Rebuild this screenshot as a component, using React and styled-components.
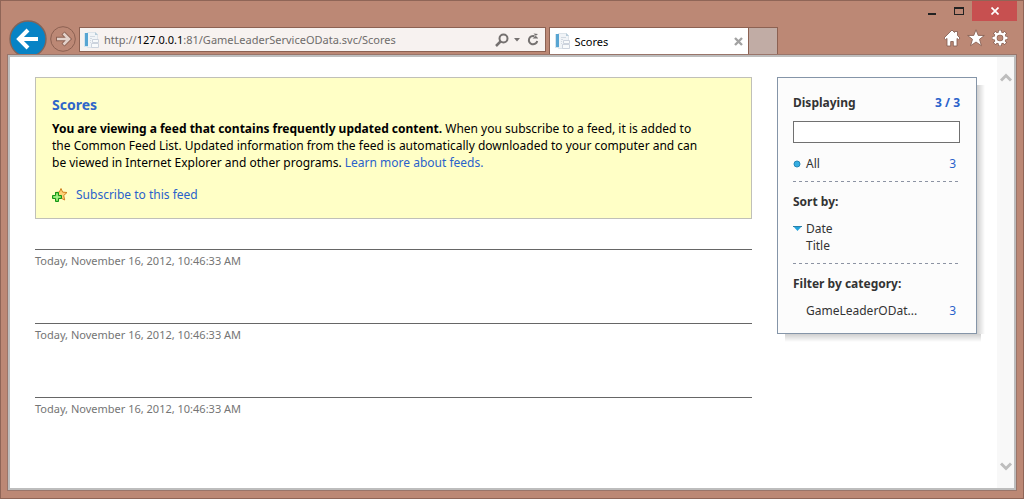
import React from 'react'
import styled, { createGlobalStyle } from 'styled-components'

const GlobalStyle = createGlobalStyle`
  * {
    box-sizing: border-box;
  }
  body {
    margin: 0;
    font-family: "Noto Sans", "Open Sans", sans-serif;
    font-size: 12px;
    line-height: 17px;
    color: #000;
  }
  button {
    border: 0;
    padding: 0;
    background: none;
    font: inherit;
  }
  svg {
    display: block;
  }
`

const Window = styled.div`
  display: flex;
  flex-direction: column;
  min-height: 100vh;
  padding: 0 6px 7px;
  border: 1px solid #8f6557;
  background: #bc8875;
`
const Caption = styled.header`
  display: flex;
  justify-content: flex-end;
  height: 20px;
`
const CaptionButton = styled.button`
  display: flex;
  align-items: center;
  justify-content: center;
  width: ${({ $close }) => ($close ? 45 : 27)}px;
  background: ${({ $close }) => ($close ? '#c75050' : 'transparent')};
`
const NavBar = styled.nav`
  display: flex;
  align-items: flex-start;
  height: 33px;
  font-size: 11px;
`
const BackButton = styled.button`
  flex: none;
  width: 38px;
  height: 38px;
  margin: -1px 3px 0 2px;
`
const ForwardButton = styled.button`
  flex: none;
  width: 26px;
  height: 26px;
  margin: 5px 3px 0 0;
`
const AddressBar = styled.div`
  display: flex;
  flex: 456 1 0;
  align-items: center;
  min-width: 0;
  height: 25px;
  margin: 6px 3px 0 0;
  padding: 0 4px 0 4px;
  border: 1px solid #8c6152;
  background: #f7f2f0;
`
const Url = styled.span`
  flex: 1;
  min-width: 0;
  margin-left: 4px;
  overflow: hidden;
  white-space: nowrap;
  color: #6f6c6b;
  b {
    font-weight: 400;
    color: #000;
  }
`
const AddressButton = styled.button`
  margin-left: 4px;
`
const Tab = styled.div`
  display: flex;
  flex: 188 1 0;
  align-items: center;
  height: 27px;
  margin-top: 6px;
  padding: 0 5px;
  border: 1px solid #8c6152;
  border-bottom: 0;
  background: #fff;
`
const TabTitle = styled.span`
  flex: 1;
  margin-left: 4px;
`
const NewTab = styled.button`
  width: 29px;
  height: 27px;
  margin-top: 6px;
  border: 1px solid #8c6152;
  border-width: 1px 1px 0 0;
  background: #c1aca5;
`
const Tools = styled.div`
  display: flex;
  flex: 231 1 0;
  justify-content: flex-end;
  gap: 6px;
  padding: 8px 8px 0 0;
`
const Frame = styled.div`
  position: relative;
  display: flex;
  flex: 1;
  border: 1px solid #99756a;
`
const Viewport = styled.div`
  display: flex;
  flex: 1;
  min-width: 0;
  border: 2px solid #bdbdbd;
  background: #fff;
`
const Page = styled.main`
  display: flex;
  flex: 1;
  align-items: flex-start;
  gap: 25px;
  min-width: 0;
  padding: 20px 20px 0 25px;
`
const Feed = styled.div`
  flex: 1;
  min-width: 0;
`
const Notice = styled.section`
  margin-bottom: 30px;
  padding: 18px 16px 15px;
  border: 1px solid #c0c0b8;
  background: #ffffc6;
  p {
    margin: 6px 0 15px;
    padding-right: 28px;
  }
`
const FeedTitle = styled.h1`
  margin: 0;
  font-size: 14px;
  line-height: 18px;
  color: #2f66c9;
`
const Link = styled.a`
  color: #2a62cb;
  text-decoration: none;
`
const Subscribe = styled(Link)`
  display: flex;
  align-items: center;
  gap: 8px;
`
const Entry = styled.article`
  height: 74px;
  padding-top: 2px;
  border-top: 1px solid #666;
  font-size: 11px;
  color: #757575;
`
const Sidebar = styled.aside`
  position: relative;
  flex: none;
  width: 200px;
  padding: 15px 16px 14px 15px;
  border: 1px solid #8595a8;
  background: #fcfcfc;
  color: #333;
  &::before,
  &::after {
    content: "";
    position: absolute;
  }
  &::before {
    top: 7px;
    bottom: -1px;
    left: 100%;
    width: 8px;
    margin-left: 1px;
    background: linear-gradient(to right, #cfcfcf, #fff);
  }
  &::after {
    top: 100%;
    left: 7px;
    right: -5px;
    height: 8px;
    margin-top: 1px;
    background: linear-gradient(to bottom, #cfcfcf, #fff);
  }
`
const Line = styled.div`
  display: flex;
  align-items: center;
  justify-content: space-between;
  height: ${({ $tall }) => ($tall ? 19 : 17)}px;
`
const Heading = styled.h2`
  margin: 0;
  font-size: 12px;
  line-height: 19px;
`
const Count = styled.span`
  padding-right: ${({ $total }) => ($total ? 0 : 4)}px;
  font-weight: ${({ $total }) => ($total ? 700 : 400)};
  color: #2a62cb;
`
const Search = styled.input`
  display: block;
  width: 100%;
  height: 22px;
  margin: 9px 0 12px;
  border: 1px solid #707070;
  background: #fff;
`
const Option = styled.button`
  display: flex;
  align-items: center;
  color: #333;
`
const Marker = styled.span`
  width: 13px;
`
const Divider = styled.hr`
  height: 1px;
  margin: 9px 2px 10px 0;
  border: 0;
  background: repeating-linear-gradient(to right, #8c93a3 0 3px, transparent 3px 6px);
`
const Group = styled.div`
  margin-top: 9px;
`
const Scrollbar = styled.div`
  display: flex;
  flex: none;
  flex-direction: column;
  justify-content: space-between;
  align-items: center;
  width: 17px;
  padding: 16px 0;
  background: #f8f8f8;
`

const PageIcon = () => (
  <svg width="16" height="16" viewBox="0 0 16 16">
    <path d="M3.5.5h8l2 2v13h-10z" fill="#f1f4f7" stroke="#dde4ea" />
    <path d="M0 1h4v14H0z" fill="#d5e5ef" />
    <path d="M1 1h3v13H1z" fill="#58a5d2" />
    <path d="M6 4.500h5M6 6.500h2M6 8.500h1M6 10.500h1" stroke="#d3dae2" />
    <path d="M8.500 7.500h6v3h-6zM7.500 11.500h7v4h-7z" fill="#f8fafb" stroke="#ccd3dd" />
    <path d="M11 0v3h3z" fill="#b6cbd9" />
  </svg>
)

const Chevron = ({ down }) => (
  <svg width="12" height="10" viewBox="0 0 12 10">
    <path d={down ? 'M1 1.5l5 5 5-5' : 'M1 7.5l5-5 5 5'} fill="none" stroke="#bdbdbd" strokeWidth="3" />
  </svg>
)

const entries = [
  'Today, November 16, 2012, 10:46:33 AM',
  'Today, November 16, 2012, 10:46:33 AM',
  'Today, November 16, 2012, 10:46:33 AM',
]

export default function App() {
  return (
    <>
      <GlobalStyle />
      <Window>
        <Caption>
          <CaptionButton aria-label="Minimize">
            <svg width="8" height="12"><path d="M0 8h8v2H0z" fill="#222" /></svg>
          </CaptionButton>
          <CaptionButton aria-label="Maximize">
            <svg width="10" height="8"><path d="M0 0h10v8H0zM1 2v5h8V2z" fill="#222" fillRule="evenodd" /></svg>
          </CaptionButton>
          <CaptionButton $close aria-label="Close">
            <svg width="8" height="8"><path d="M.5.5l7 7M7.5.5l-7 7" stroke="#fff" strokeWidth="1.7" /></svg>
          </CaptionButton>
        </Caption>
        <NavBar>
          <BackButton aria-label="Back">
            <svg width="38" height="38" viewBox="0 0 38 38">
              <circle cx="19" cy="19" r="18" fill="#0783c5" stroke="#80645a" strokeWidth="1.4" />
              <path d="M29 19H11M19 10l-9 9 9 9" fill="none" stroke="#fff" strokeWidth="4" />
            </svg>
          </BackButton>
          <ForwardButton aria-label="Forward">
            <svg width="26" height="26" viewBox="0 0 26 26">
              <circle cx="13" cy="13" r="12.3" fill="none" stroke="#8c6152" />
              <path d="M6 13h12M13 7l6 6-6 6" fill="none" stroke="#8c6152" strokeWidth="4.4" />
              <path d="M7 13h11M13.5 7.5L19 13l-5.500 5.500" fill="none" stroke="#e3d2ca" strokeWidth="2.600" />
            </svg>
          </ForwardButton>
          <AddressBar>
            <PageIcon />
            <Url>http://<b>127.0.0.1</b>:81/GameLeaderServiceOData.svc/Scores</Url>
            <AddressButton aria-label="Search">
              <svg width="14" height="14" viewBox="0 0 14 14" fill="none" stroke="#757170">
                <circle cx="8.500" cy="5.500" r="4" strokeWidth="2" />
                <path d="M5.500 8.500L1 13" strokeWidth="2.500" />
              </svg>
            </AddressButton>
            <AddressButton aria-label="Show address list">
              <svg width="8" height="5"><path d="M1 1h6L4 4.500z" fill="#757170" /></svg>
            </AddressButton>
            <AddressButton aria-label="Refresh">
              <svg width="16" height="14" viewBox="0 0 16 14">
                <path d="M9.500 3.200A4.200 4.200 0 1 0 12.200 8" fill="none" stroke="#757170" strokeWidth="2" />
                <path d="M8.500.5l4.500 4.500V1M13 1v4.500H7.500z" fill="#757170" />
              </svg>
            </AddressButton>
          </AddressBar>
          <Tab>
            <PageIcon />
            <TabTitle>Scores</TabTitle>
            <button aria-label="Close tab">
              <svg width="9" height="9"><path d="M1 1l7 7M8 1L1 8" stroke="#a2a2a2" strokeWidth="2.400" /></svg>
            </button>
          </Tab>
          <NewTab aria-label="New tab" />
          <Tools>
            <button aria-label="Home">
              <svg width="18" height="18" viewBox="0 0 18 18">
                <path d="M9 1L1 9l1.500 1.700L4 9.400V17h3.700v-4.500h2.600V17H14V9.400l1.500 1.300L17 9l-2.500-2.500V2.500h-3v1z" fill="#fff" stroke="#80594c" strokeWidth=".8" />
              </svg>
            </button>
            <button aria-label="Favorites">
              <svg width="18" height="18" viewBox="0 0 18 18">
                <path d="M9 .8l2.200 5.600 6.100.1-4.800 3.800 1.900 6.400L9 13l-5.400 3.700 1.900-6.400L.7 6.500l6.100-.1z" fill="#fff" stroke="#80594c" strokeWidth=".8" />
              </svg>
            </button>
            <button aria-label="Tools">
              <svg width="18" height="18" viewBox="0 0 18 18" fill="none">
                <g stroke="#80594c">
                  <circle cx="9" cy="9" r="4.500" strokeWidth="3.600" />
                  <path d="M9 1v3M9 14v3M1 9h3M14 9h3M3.300 3.300l2.200 2.200M12.500 12.500l2.200 2.200M3.300 14.700l2.200-2.200M12.500 5.500l2.200-2.200" strokeWidth="3.600" />
                </g>
                <g stroke="#fff">
                  <circle cx="9" cy="9" r="4.500" strokeWidth="2.400" />
                  <path d="M9 1.500V4M9 14v2.500M1.500 9H4M14 9h2.500M3.700 3.700l1.800 1.800M12.500 12.500l1.800 1.800M3.700 14.300l1.800-1.800M12.500 5.500l1.800-1.800" strokeWidth="2.400" />
                </g>
              </svg>
            </button>
          </Tools>
        </NavBar>
        <Frame>
          <Viewport>
            <Page>
              <Feed>
                <Notice>
                  <FeedTitle>Scores</FeedTitle>
                  <p>
                    <b>You are viewing a feed that contains frequently updated content.</b> When you
                    subscribe to a feed, it is added to the Common Feed List. Updated information from
                    the feed is automatically downloaded to your computer and can be viewed in Internet
                    Explorer and other programs. <Link href="#learn">Learn more about feeds.</Link>
                  </p>
                  <Subscribe href="#subscribe">
                    <svg width="16" height="16" viewBox="0 0 16 16">
                      <path d="M9 1.500l1.600 3.600 4.400.4-3.300 3 1 4.500-3.700-2-3.500 1.500.8-4L3 5.500l4.400-.4z" fill="#ffd377" stroke="#cf8121" />
                      <path d="M3.500 5.500h3v3h3v3h-3v3h-3v-3h-3v-3h3z" fill="#72dc55" stroke="#159419" />
                      <path d="M5 7v6M2 10h6" stroke="#b7f49d" />
                    </svg>
                    Subscribe to this feed
                  </Subscribe>
                </Notice>
                {entries.map((date, i) => (
                  <Entry key={i}>{date}</Entry>
                ))}
              </Feed>
              <Sidebar>
                <Line $tall>
                  <Heading>Displaying</Heading>
                  <Count $total>3 / 3</Count>
                </Line>
                <Search aria-label="Search feed" />
                <Line>
                  <Option>
                    <Marker>
                      <svg width="8" height="8"><circle cx="4" cy="4" r="3" fill="#35aee2" stroke="#2587b8" /></svg>
                    </Marker>
                    All
                  </Option>
                  <Count>3</Count>
                </Line>
                <Divider />
                <Heading>Sort by:</Heading>
                <Group>
                  <Option>
                    <Marker>
                      <svg width="9" height="5"><path d="M0 0h9L4.500 5z" fill="#22a3dc" /><path d="M0 .5h9" stroke="#2b7fa8" /></svg>
                    </Marker>
                    Date
                  </Option>
                  <Option>
                    <Marker />
                    Title
                  </Option>
                </Group>
                <Divider />
                <Heading>Filter by category:</Heading>
                <Group>
                  <Line>
                    <Option>
                      <Marker />
                      GameLeaderODat...
                    </Option>
                    <Count>3</Count>
                  </Line>
                </Group>
              </Sidebar>
            </Page>
            <Scrollbar>
              <Chevron />
              <Chevron down />
            </Scrollbar>
          </Viewport>
        </Frame>
      </Window>
    </>
  )
}
